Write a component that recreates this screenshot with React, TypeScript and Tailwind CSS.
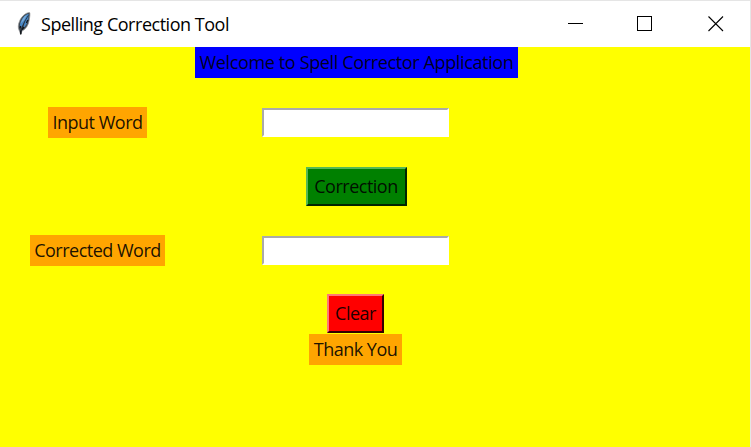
import type { ReactNode } from "react";

function Feather() {
  return (
    <svg width="16" height="24" viewBox="0 0 16 24" className="block">
      <path d="M13.6.5C10 .5 5.4 4.4 3.6 9C2 12.5 1.8 16 3.2 18.6L4.8 22.8L6 19C10 17 12.6 13 13.2 8.2C13.7 5 14.4 1.6 13.6.5Z" fill="#3d4650" stroke="#9a9a9a" strokeWidth=".7" />
      <path d="M12.6 1.8C8.5 2.8 4.6 7.5 3.8 13.5L5 16L9.6 7.8L6.8 16.5C10 14 12 10 12.4 6.5Z" fill="#4785c2" />
      <path d="M11 2.8C8 4.4 5.8 7.8 4.9 11.5L8.2 8Z" fill="#79abd9" />
      <path d="M12.4 3.5C9 8.5 6.2 13 4.7 22.5" fill="none" stroke="#1c242d" strokeWidth=".8" />
      <path d="M10.4 11L11.8 8M4.8 14L4 16M8 15L6 17.5M4.7 18.5V22" stroke="#11161b" strokeWidth="1.3" />
    </svg>
  );
}

function Label({ className, children }: { className: string; children: ReactNode }) {
  return <div className={`flex h-[31px] items-center justify-center whitespace-nowrap ${className}`}>{children}</div>;
}

function Entry({ label }: { label: string }) {
  return (
    <input
      aria-label={label}
      className="block h-[29px] w-[187px] border-2 border-t-[#aaaaaa] border-r-white border-b-white border-l-[#aaaaaa] bg-white px-1 outline-none"
    />
  );
}

export default function App() {
  return (
    <div className="flex h-[447px] w-[751px] flex-col overflow-hidden border-t border-r border-[#e5e5e5] bg-white font-['Open_Sans','Noto_Sans',sans-serif] text-[18px] text-black">
      <header className="flex h-[46px] shrink-0 items-center">
        <div className="ml-4 w-[25px]"><Feather /></div>
        <h1 className="text-[18px] leading-6 font-normal tracking-[-0.47px] whitespace-nowrap">Spelling Correction Tool</h1>
        <div className="mr-[26px] ml-auto flex items-center">
          <svg className="mr-[54px]" width="15" height="16" viewBox="0 0 15 16" shapeRendering="crispEdges"><path d="M0 7.5H15" stroke="black" /></svg>
          <svg className="mr-[56px]" width="15" height="16" viewBox="0 0 15 16" shapeRendering="crispEdges"><path d="M.5.5H14.5V14.5H.5Z" fill="none" stroke="black" /></svg>
          <svg width="16" height="16" viewBox="0 0 16 16"><path d="M.5.5L15 15M15 .5L.5 15" stroke="black" strokeWidth="1.1" /></svg>
        </div>
      </header>
      <main className="grid flex-1 grid-cols-[195px_321px_1fr] grid-rows-[31px_29px_31px_29px_39px_29px_31px_28px_40px_31px] justify-items-center bg-[#ffff00] tracking-[-0.5px] text-black/90">
        <Label className="col-start-2 row-start-1 w-[323px] justify-self-start bg-[#0000ff] tracking-[-0.36px]">Welcome to Spell Corrector Application</Label>
        <Label className="col-start-1 row-start-3 w-[99px] bg-[#ffa500]">Input Word</Label>
        <div className="col-start-2 row-start-3 flex items-center"><Entry label="Input Word" /></div>
        <button className="col-start-2 row-start-5 ml-px h-[39px] w-[101px] border-2 border-t-[#55b855] border-r-[#002500] border-b-[#002500] border-l-[#55b855] bg-[#008000] tracking-[-0.5px]">Correction</button>
        <Label className="col-start-1 row-start-7 w-[135px] bg-[#ffa500]">Corrected Word</Label>
        <div className="col-start-2 row-start-7 flex items-center"><Entry label="Corrected Word" /></div>
        <button className="col-start-2 row-start-9 h-[39px] w-[57px] border-2 border-t-[#ff7777] border-r-[#350000] border-b-[#350000] border-l-[#ff7777] bg-[#ff0000] tracking-[-0.5px]">Clear</button>
        <Label className="col-start-2 row-start-10 w-[93px] bg-[#ffa500]">Thank You</Label>
      </main>
    </div>
  );
}
